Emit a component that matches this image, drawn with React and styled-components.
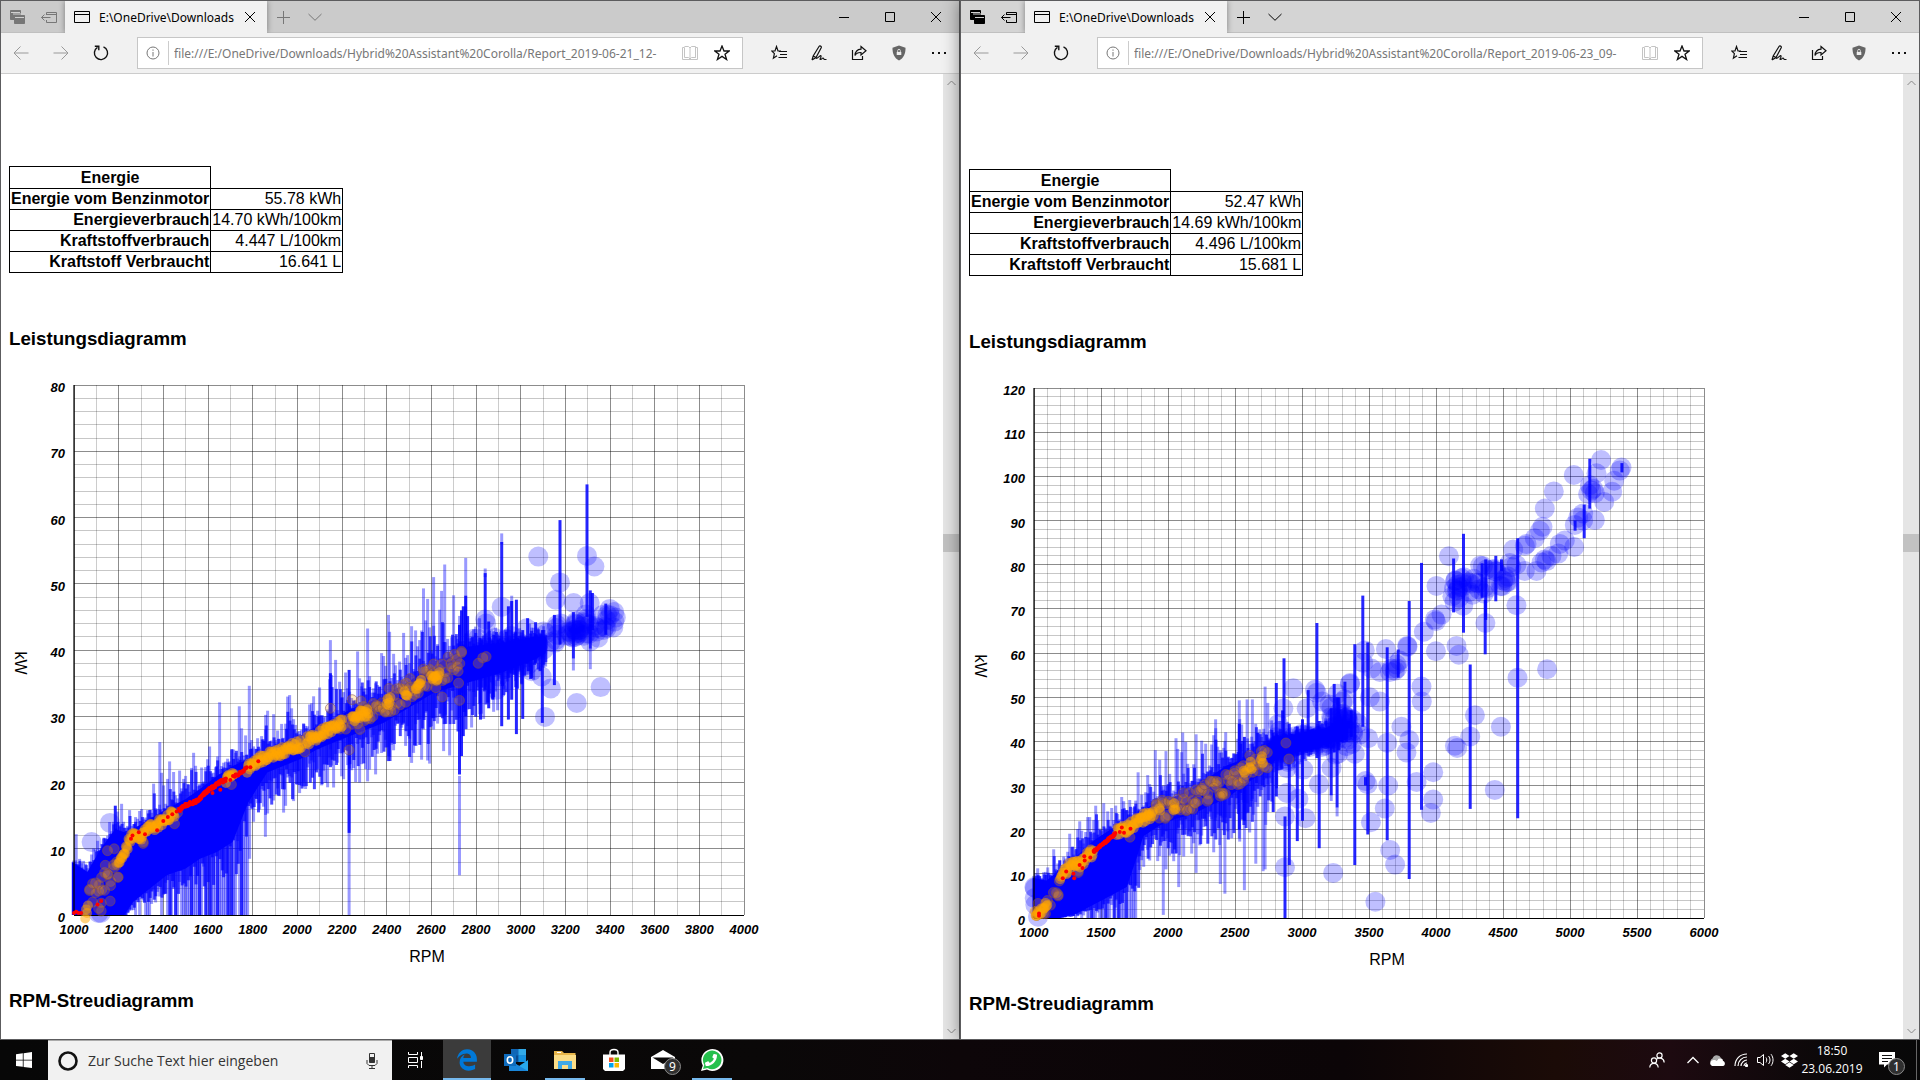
import React from "react";
import styled, { createGlobalStyle } from "styled-components";
import { FaEdgeLegacy, FaDropbox, FaPhoneAlt } from "react-icons/fa";

const GlobalStyle = createGlobalStyle`
    body {
        margin: 0;
        background: #000;
        color: #000;
        font-family: "Noto Sans", "Open Sans", sans-serif;
        font-size: 12px;
    }
    button, input {
        font-family: inherit;
        font-size: inherit;
        color: inherit;
        border: 0;
        padding: 0;
        background: none;
    }
    svg {
        display: block;
        flex-shrink: 0;
    }
`;

const Desktop = styled.div`
    display: flex;
    flex-direction: column;
    height: 100vh;
    overflow: hidden;
`;

const Windows = styled.div`
    flex: 1;
    min-height: 0;
    display: grid;
    grid-template-columns: 1fr 1fr;
`;

const BrowserWindow = styled.section`
    display: flex;
    flex-direction: column;
    min-width: 0;
    min-height: 0;
    border: 1px solid #5c5c5e;
    background: #fff;
    box-shadow: ${({ $active }) => ($active ? "0 0 16px rgba(0, 0, 0, 0.45)" : "none")};
`;

const TabStrip = styled.div`
    display: flex;
    height: 32px;
    color: ${({ $active }) => ($active ? "#000" : "#777")};
    background: ${({ $active }) => ($active ? "#d4d4d4" : "#cbcbcb")};
    box-shadow: inset 0 -1px 0 #c0c0c0;
`;

const StripButton = styled.button`
    display: flex;
    align-items: center;
    justify-content: center;
    width: 32px;
`;

const Tab = styled.div`
    display: flex;
    align-items: center;
    width: 202px;
    padding: 0 12px 0 9px;
    box-sizing: border-box;
    color: #000;
    background: #f1f1f1;
    box-shadow: 0 0 6px rgba(0, 0, 0, 0.4);
    clip-path: inset(0 -8px 0 -8px);
`;

const TabTitle = styled.span`
    flex: 1;
    margin: 0 8px 0 9px;
    overflow: hidden;
    white-space: nowrap;
`;

const Caption = styled.div`
    display: flex;
    margin-left: auto;
    color: #000;
`;

const CaptionButton = styled.button`
    display: flex;
    align-items: center;
    justify-content: center;
    width: 46px;
`;

const Toolbar = styled.div`
    display: flex;
    align-items: center;
    height: 40px;
    background: #f1f1f1;
    border-bottom: 1px solid #ccc;
`;

const ToolButton = styled.button`
    display: flex;
    align-items: center;
    justify-content: center;
    width: 40px;
    height: 32px;
    color: ${({ disabled }) => (disabled ? "#999" : "#111")};
`;

const AddressBar = styled.div`
    flex: 1;
    min-width: 0;
    display: flex;
    align-items: center;
    height: 30px;
    margin: 0 16px;
    border: 1px solid #c6c6c6;
    background: #fff;
    color: #777;
`;

const InfoMark = styled.span`
    display: flex;
    justify-content: center;
    align-items: center;
    width: 30px;
    height: 24px;
    border-right: 1px solid #ccc;
`;

const AddressInput = styled.input`
    flex: 1;
    min-width: 0;
    margin-left: 5px;
    outline: 0;
`;

const BookMark = styled.button`
    display: flex;
    justify-content: center;
    width: 24px;
    color: #c4c4c4;
`;

const Viewport = styled.div`
    flex: 1;
    min-height: 0;
    display: flex;
`;

const Page = styled.main`
    flex: 1;
    min-width: 0;
    overflow: hidden;
    padding: ${({ $top }) => $top}px 8px 0;
    font-family: "Liberation Sans", Arial, sans-serif;
    font-size: 16px;
`;

const ScrollBar = styled.div`
    display: flex;
    flex-direction: column;
    width: 16px;
    background: #e5e5e5;
    color: #888;
`;

const ScrollButton = styled.button`
    display: flex;
    align-items: center;
    justify-content: center;
    height: 17px;
`;

const ScrollSpace = styled.div`
    flex: ${({ $grow }) => $grow};
`;

const ScrollThumb = styled.div`
    height: 18px;
    background: #c2c2c2;
`;

const EnergyTable = styled.table`
    border-collapse: collapse;
    margin-bottom: 55px;
    line-height: 18px;

    th, td {
        border: 1px solid #000;
        padding: 1px;
        text-align: right;
        white-space: nowrap;
    }
    thead th {
        text-align: center;
        line-height: 19px;
    }
`;

const Heading = styled.h3`
    margin: 0 0 19px;
    line-height: 22px;
`;

const ChartSvg = styled.svg`
    margin-bottom: 21px;
    overflow: visible;
`;

const TickText = styled.text`
    font-size: 13px;
    font-weight: bold;
    font-style: italic;
    text-anchor: ${({ $anchor }) => $anchor};
`;

const AxisTitle = styled.text`
    font-size: 16px;
    text-anchor: middle;
`;

const TaskBar = styled.footer`
    display: flex;
    height: 40px;
    color: #fff;
    background: linear-gradient(90deg, #070707 0%, #0a0808 40%, #0d0609 50%, #0b0507 70%, #1b0b07 81%, #1d0a10 87%, #0b0809 95%, #080808 100%);
`;

const TaskButton = styled.button`
    display: flex;
    align-items: center;
    justify-content: center;
    position: relative;
    width: 48px;
    height: 40px;
    background: ${({ $current }) => ($current ? "#3b3b3b" : "none")};

    &::after {
        content: "";
        position: absolute;
        bottom: 0;
        left: ${({ $current }) => ($current ? 0 : 4)}px;
        right: ${({ $current }) => ($current ? 0 : 4)}px;
        height: 2px;
        background: ${({ $running }) => ($running ? "#76b9ed" : "transparent")};
    }
`;

const TaskApps = styled.div`
    display: flex;
    gap: 1px;
    margin-left: 3px;
`;

const SearchBox = styled.label`
    display: flex;
    align-items: center;
    width: 344px;
    padding: 0 14px 0 10px;
    box-sizing: border-box;
    background: #f1f1f1;
    border-top: 1px solid #aaa;
    color: #333;
`;

const SearchInput = styled.input`
    flex: 1;
    min-width: 0;
    margin-left: 10px;
    font-family: "Open Sans", "Noto Sans", sans-serif;
    font-size: 14px;
    outline: 0;

    &::placeholder {
        color: #333;
        opacity: 1;
    }
`;

const Count = styled.span`
    position: absolute;
    right: 6px;
    bottom: 5px;
    width: 17px;
    height: 17px;
    line-height: 15px;
    border: 1px solid #8a8a8a;
    box-sizing: border-box;
    border-radius: 50%;
    background: #2f2f2f;
    text-align: center;
`;

const Tray = styled.div`
    display: flex;
    align-items: center;
    margin-left: auto;
`;

const TrayButton = styled.button`
    display: flex;
    align-items: center;
    justify-content: center;
    width: ${({ $wide }) => ($wide ? 48 : 24)}px;
    height: 40px;
`;

const Clock = styled.time`
    width: 62px;
    font-family: "Open Sans", "Noto Sans", sans-serif;
    text-align: center;
    line-height: 18px;
    white-space: nowrap;
`;

const DesktopEdge = styled.div`
    width: 3px;
    height: 40px;
    margin-left: 5px;
    border-left: 1px solid #666;
`;

const Line = ({ w = 16, h = 16, width = 1, children }) => (
    <svg width={w} height={h} viewBox={`0 0 ${w} ${h}`} fill="none" stroke="currentColor" strokeWidth={width}>
        {children}
    </svg>
);

const TabsAsideIcon = () => (
    <Line>
        <path d="M1.500 1.500h10v9h-10z" fill="currentColor" />
        <path d="M2 3.500h9" stroke="#d0d0d0" />
        <path d="M4 5h12" stroke="#d0d0d0" />
        <path d="M5.500 6.500h10v8h-10z" fill="currentColor" />
        <path d="M6 8.500h9" stroke="#d0d0d0" />
    </Line>
);

const SetAsideIcon = () => (
    <Line>
        <path d="M5.500 6V3.500h10v10h-10V11M5.500 5.500h10M.5 8.500h9M3.500 5.500l-3 3 3 3" />
    </Line>
);

const StarPath = "M8 1l2 5h5.200l-4.200 3.300 1.600 5.200L8 11.400l-4.600 3.100L5 9.300.8 6H6z";

// seeded so that every render gives the same scatter
const makeRandom = (seed) => () => {
    seed = (seed * 1664525 + 1013904223) % 4294967296;
    return seed / 4294967296;
};

const lerp = (points, x) => {
    if (x <= points[0][0]) return points[0].slice(1);
    for (let i = 1; i < points.length; i++) {
        if (x <= points[i][0]) {
            const a = points[i - 1];
            const b = points[i];
            const t = (x - a[0]) / (b[0] - a[0]);
            return a.slice(1).map((v, n) => v + (b[n + 1] - v) * t);
        }
    }
    return points[points.length - 1].slice(1);
};

const range = (from, to, step) => {
    const list = [];
    for (let v = from; v <= to + 0.001; v += step) list.push(v);
    return list;
};

const trip1 = {
    seed: 21,
    maxRpm: 4000,
    maxKw: 80,
    majorRpm: 200,
    // rpm, top, bottom
    core: [[990, 8, 0], [1060, 6.500, 0], [1120, 10, 0], [1185, 13, 0], [1225, 12.500, 0], [1265, 13, 2], [1340, 14.500, 4], [1415, 16, 6], [1500, 17.500, 7], [1564, 19, 8.500], [1640, 21, 9.500], [1710, 22.500, 11], [1780, 23.500, 17], [1865, 25, 21.500], [1937, 26, 22.500], [2012, 27, 23.500], [2087, 28.500, 25], [2160, 29.500, 26], [2236, 31, 27], [2310, 32, 28], [2385, 33, 29], [2460, 34.500, 30.500], [2609, 37.500, 33.500], [2758, 40.500, 35], [2907, 41, 36.500], [3057, 42, 38.500], [3112, 42, 39.500]],
    outer: [[990, 10.500, 0], [1060, 9, 0], [1120, 14, 0], [1185, 17, 0], [1300, 18, 0], [1380, 24, 0], [1440, 23, 0], [1570, 26, 0], [1650, 28, 0], [1780, 30, 0], [1790, 30, 14], [1870, 31, 14], [1920, 33, 14], [2000, 34, 16], [2110, 38, 17], [2200, 40, 18], [2300, 43, 20], [2400, 45, 21], [2500, 47, 21], [2610, 50, 23], [2700, 49, 24], [2750, 51, 25], [2800, 46, 28], [2900, 44, 31], [3000, 44.500, 33], [3112, 44, 37]],
    zeroTo: 1780,
    centre: [[1050, 0], [1075, 3], [1120, 4.500], [1180, 6], [1210, 8.500], [1240, 10.500], [1270, 12.500], [1300, 12], [1330, 12.800], [1370, 13.700], [1430, 15], [1470, 15.800], [1500, 16.600], [1550, 17.200], [1600, 18.800], [1650, 20], [1700, 20.600], [1750, 21.600], [1790, 22.500], [1865, 24], [1937, 24.800], [2010, 25.700], [2087, 27], [2160, 28.400], [2236, 29.700], [2310, 30.500], [2385, 31.700], [2460, 33], [2540, 34.700], [2609, 35.700], [2650, 36.800], [2720, 38], [2850, 39.500]],
    solid: [[1050, 1066], [1200, 1450], [1680, 1720], [1775, 2020], [2040, 2205], [2245, 2320], [2400, 2420], [2480, 2495], [2530, 2555], [2600, 2640]],
    dim: [[1070, 1200], [1070, 1200], [1450, 1475], [2020, 2040], [2190, 2740], [2300, 2720]],
    red: [[1470, 1680], [1475, 1680], [1720, 1775]],
    redDots: [[1000, 0.300], [1010, 0.500], [1020, 0.300], [1032, 0.300], [1105, 1.600], [1122, 2.100], [1255, 11.500], [1262, 12], [1290, 12.500], [1318, 12.200], [1372, 12.800], [1400, 14.200], [1420, 14.800], [1440, 15.200], [1460, 15.600], [1655, 18.900], [1620, 18.400], [1700, 20.400], [1712, 21], [1790, 22.300], [1825, 23.200]],
    orangeDots: [[1110, 1], [1122, 0.600], [1122, 1.800], [1162, 2.100], [1197, 5.700], [1197, 5.700], [1150, 9.700], [1180, 10], [1140, 7.500], [1310, 10.800], [1310, 11], [1705, 19.700], [2148, 31.200], [2232, 24.900], [2245, 32.500], [2285, 32.300], [2280, 28], [2411, 34.200], [2564, 37.100], [2611, 37.900], [2648, 32.900], [2726, 32.400], [2735, 39.800], [2735, 39.600], [2722, 35], [2505, 35.700], [2720, 36.800], [2810, 38], [2830, 38.800], [2845, 39]],
    clusters: [[2760, 3110, 38.500, 40.500, 3.500, 44], [3110, 3420, 41.500, 44.500, 3, 34], [3220, 3320, 42.500, 44.500, 2, 10]],
    bubbles: [[3079, 54.100], [3297, 54.200], [3330, 52.600], [3176, 50.200], [3157, 47.600], [3237, 47.100], [2915, 46.500], [2841, 44.600], [2845, 44], [3309, 47.100], [3399, 46.200], [3426, 44.900], [3135, 34.200], [3109, 29.900], [3251, 32], [3358, 34.400], [3094, 36], [3049, 36.800], [3311, 41.300], [3385, 43.300], [3378, 43.500], [3370, 43], [3385, 44.500], [2893, 34], [2900, 36], [1079, 11], [1161, 13.900], [1109, 0.300], [1120, 0.300]],
    spikes: [[3297, 65, 45], [3176, 59.600, 40.800], [2915, 56.300, 28.500], [2841, 51.600, 34], [2960, 47.400, 32.500], [2981, 47.600, 27.300], [2945, 46.600, 29.500], [3009, 43, 29.600], [3031, 44.800, 38], [3067, 44.200, 38], [3097, 43, 29], [3151, 45.300, 34.700], [3236, 45.700, 38.700], [3312, 49, 40.200], [3321, 48.600, 43], [3381, 47, 42.300], [2726, 43.800, 21.200], [2754, 48.200, 30], [2735, 46, 24], [2743, 46.600, 27], [2857, 44.300, 31.200], [2820, 41, 29.500], [2875, 41, 32.500], [2232, 37, 12.400], [2148, 36.500, 29], [1185, 16.500, 4]],
    faint: [[2915, 57.600, 56], [2841, 52.300, 51], [2232, 25, 0], [2726, 21, 6], [2754, 53.900, 40], [3236, 38.700, 36.900], [3312, 40.200, 37.100], [2660, 52.900, 30], [1785, 34.600, 20], [1652, 32.100, 18], [1740, 31.500, 18], [1857, 28, 11.800], [2148, 41.500, 25], [2408, 45.300, 24], [1384, 26.100, 12], [2960, 48.200, 34], [1010, 12.200, 0], [2610, 51, 28], [2565, 49.300, 28]],
};

const trip2 = {
    seed: 77,
    maxRpm: 6000,
    maxKw: 120,
    majorRpm: 500,
    core: [[990, 9, 0], [1095, 8.500, 0], [1194, 11, 0], [1318, 14, 1], [1443, 17.500, 3], [1567, 20, 5], [1692, 22, 7], [1770, 23.500, 14], [1816, 24.500, 18.500], [1940, 26.500, 21], [2065, 27.500, 22.500], [2189, 29.500, 23.500], [2313, 32, 25.500], [2438, 34.500, 27], [2562, 36, 30], [2687, 38, 32.500], [2811, 41, 36], [2935, 41.500, 37.500], [3060, 42, 38], [3184, 43, 40], [3240, 44, 41], [3290, 44, 41.500], [3330, 43, 41.500]],
    outer: [[990, 12.500, 0], [1050, 12, 0], [1180, 17, 0], [1300, 21.500, 0], [1430, 26, 0], [1570, 27, 0], [1770, 30, 0], [1790, 31, 11], [1905, 36, 12], [1985, 36, 12], [2110, 40, 12], [2205, 40, 14], [2355, 43, 14], [2450, 42, 14], [2590, 48, 17], [2720, 47, 20], [2790, 45, 22], [2830, 45, 31], [2935, 44, 34], [3060, 44, 36], [3200, 46, 38], [3400, 45, 40]],
    zeroTo: 1770,
    centre: [[1000, 0.800], [1040, 1.500], [1100, 3], [1130, 5], [1180, 6.500], [1200, 8.500], [1250, 11.300], [1318, 12], [1368, 13], [1443, 15], [1617, 19.300], [1692, 20.300], [1816, 22.600], [1890, 23.600], [1940, 24.300], [2065, 25.500], [2189, 27], [2313, 28.600], [2438, 30], [2562, 33], [2637, 35], [2711, 36], [2900, 37.500]],
    solid: [[1005, 1100], [1195, 1445], [1617, 1890], [1935, 1945], [2040, 2055], [2565, 2575], [2610, 2630], [2695, 2710]],
    dim: [[1100, 1195], [1890, 2140], [1890, 2750], [2140, 2720], [2880, 2910]],
    red: [[1445, 1610], [1450, 1600]],
    redDots: [[1037, 0.500], [1037, 1], [1300, 9], [1295, 10], [1240, 10.500], [1215, 9], [1340, 12], [1362, 11.300], [1378, 13], [1375, 14], [1420, 13.700], [1448, 15], [1455, 15.300], [1640, 19.500], [1655, 20.500], [1672, 19.300], [1720, 20.200]],
    orangeDots: [[1180, 5.300], [1180, 5], [1716, 18.300], [1330, 10.300], [1330, 10.600], [1030, 3.300], [1070, 1], [1085, 1], [1020, 0.600], [2200, 26], [2300, 26.800], [2390, 27.600], [2410, 27.800], [2520, 30.800], [2562, 31.500], [2740, 34], [2720, 34.200], [1980, 22.800]],
    clusters: [[2760, 3240, 38.500, 41, 2, 60], [3220, 3440, 44, 42.500, 4.500, 30], [3180, 3340, 48, 48, 4, 12], [4120, 4420, 74, 77.500, 4.500, 26], [4380, 4560, 77, 77.500, 4, 9], [2800, 2900, 44, 36, 4, 12]],
    bubbles: [[5232, 103.700], [5384, 102], [5372, 101.300], [5028, 100.300], [4879, 96.600], [4812, 92.700], [5330, 99], [5315, 96.500], [5255, 94.200], [5185, 90.100], [5198, 100.700], [5148, 98], [5160, 96.800], [5173, 97.200], [5135, 96], [5185, 96.200], [5061, 90.700], [5098, 91.600], [5036, 89], [5098, 90], [5031, 84], [4961, 85.500], [4924, 84.700], [4912, 82.500], [4862, 82], [4825, 80.800], [4812, 81.200], [4787, 80.500], [4750, 78.600], [4663, 78.600], [4795, 88.600], [4775, 87.700], [4737, 86], [4675, 84.700], [4663, 84.300], [4576, 83.400], [4563, 79.500], [4600, 80], [4551, 80.400], [4526, 76], [4501, 76.400], [4538, 77.300], [4600, 70.800], [4608, 54.400], [4829, 56.300], [4484, 43.300], [4439, 29], [4096, 81.900], [4004, 75.200], [4369, 66.800], [4203, 70.700], [4330, 79.800], [4041, 68.700], [3999, 67.200], [3992, 67.600], [3909, 64.800], [3999, 60.400], [4153, 61.600], [4170, 59.600], [3892, 52.400], [3894, 49], [4290, 45.900], [4255, 41.100], [4141, 39], [4158, 38.500], [3785, 61.600], [3787, 61.400], [3979, 33], [3855, 30.800], [3979, 26.800], [3961, 23.800], [3800, 40.300], [3780, 37.500], [3636, 39.700], [3742, 43.300], [3643, 30], [3618, 24.800], [3658, 15.400], [3695, 12.100], [3548, 3.700], [3233, 10.200], [3514, 21.700], [3474, 31], [3489, 30.300], [3394, 37.200], [3494, 40.700], [3581, 49], [3506, 50], [3626, 60.900], [3469, 60.600], [3457, 57.800], [3519, 56.500], [3581, 55.700], [3668, 56.500], [3705, 57.400], [3730, 58.300], [3693, 56], [3656, 55.700], [3710, 56.500], [3357, 53], [3360, 53.200], [3220, 34], [3126, 30.300], [3026, 22.600], [2935, 52], [3097, 51.700], [3110, 51], [3035, 47.500], [2861, 47.500], [3010, 33.600], [2886, 28.300], [2973, 27], [2873, 23], [2873, 11.500], [3150, 49], [3250, 37], [3270, 37.200], [1007, 6.800], [1003, 7], [1005, 4.500], [1010, 3], [1030, 0.300]],
    spikes: [[5148, 104, 92.700], [5387, 103, 100.900], [5038, 90, 87.700], [5106, 93.600, 86], [4131, 81.400, 69.200], [4205, 87, 64.600], [4344, 80.300, 72.500], [4371, 81.200, 67.500], [4367, 72, 59.700], [4446, 82, 71.700], [4489, 81.200, 78.600], [4610, 86, 22.600], [4255, 57.400, 24.700], [3892, 80.400, 24.500], [3800, 71.800, 8.800], [3636, 61.300, 17.600], [3718, 60.800, 54.400], [3491, 62.400, 18.900], [3454, 73, 43.300], [3394, 62, 12], [3474, 31.900, 30], [3111, 66.800, 36.200], [3128, 44.600, 15.800], [3218, 47.500, 27.800], [3240, 53, 37.500], [3262, 50, 25], [3275, 50, 38], [3320, 53.500, 43], [3368, 47, 41], [3004, 45, 22], [3046, 51.600, 40], [2808, 53.200, 27.500], [2866, 58.800, 36], [2855, 47, 36], [2873, 23, 0], [2905, 44, 12], [2965, 43.400, 17.400], [2570, 41, 22], [2532, 44, 20], [2785, 42, 24]],
    faint: [[2532, 49.300, 18], [2590, 49.500, 26], [2630, 49.500, 27], [2725, 52.400, 11], [2710, 42, 10.600], [2745, 48.700, 24], [1965, 30, 0.700], [2080, 30, 7], [2425, 40, 5.500], [2390, 38, 7.700], [2570, 40, 6.300], [2655, 40, 12.300], [2210, 41.600, 10.200], [2355, 45, 22], [2110, 42, 20], [1777, 33, 14], [1905, 38, 18], [1985, 37.800, 11], [2060, 40.700, 20], [3262, 25, 23], [3218, 28, 26.500]],
};

const PLOT = { left: 65, top: 16, width: 670, height: 530 };

function PowerChart({ trip }) {
    const random = makeRandom(trip.seed);
    const sx = (rpm) => PLOT.left + ((rpm - 1000) / (trip.maxRpm - 1000)) * PLOT.width;
    const sy = (kw) => PLOT.top + PLOT.height - (kw / trip.maxKw) * PLOT.height;
    const pxRpm = (trip.maxRpm - 1000) / PLOT.width;
    const f = (n) => n.toFixed(1);
    const bar = (rpm, top, bottom) => `M${f(sx(rpm))} ${f(sy(top))}V${f(sy(bottom))}`;

    const firstRpm = trip.core[0][0];
    const lastRpm = trip.core[trip.core.length - 1][0];

    const faint = trip.faint.map((s) => bar(...s));
    const middle = [];
    range(firstRpm + 8, lastRpm, pxRpm * 2).forEach((rpm) => {
        const [coreTop, coreBottom] = lerp(trip.core, rpm);
        const [top, bottom] = lerp(trip.outer, rpm);
        const up = random();
        const down = random();
        const early = rpm < trip.zeroTo;
        const toZero = rpm > 1220 && early && random() < (rpm < 1420 ? 0.35 : 0.8);
        const low = early
            ? coreBottom * (0.3 + random() * 0.6)
            : coreBottom + (bottom - coreBottom) * (0.15 + down * down * 0.85);
        faint.push(bar(rpm, coreTop + (top - coreTop) * (0.1 + up * up * 0.9), toZero ? 0 : low));
        const midBottom = early ? coreBottom * 0.3 : bottom;
        const midDown = random();
        middle.push(bar(
            rpm + random() * pxRpm,
            coreTop + (top - coreTop) * up * random() * 0.75,
            toZero && random() < 0.3 ? 0 : coreBottom + (midBottom - coreBottom) * midDown * 0.75
        ));
    });

    const coreShape = [
        ...trip.core.map(([rpm, top]) => `${f(sx(rpm))},${f(sy(top))}`),
        ...[...trip.core].reverse().map(([rpm, , bottom]) => `${f(sx(rpm))},${f(sy(bottom))}`),
    ].join(" ");

    const bubbles = [...trip.bubbles];
    trip.clusters.forEach(([from, to, kwFrom, kwTo, spread, count]) => {
        for (let i = 0; i < count; i++) {
            const t = random();
            const off = (random() + random() - 1) * spread;
            bubbles.push([from + (to - from) * t, kwFrom + (kwTo - kwFrom) * t + off]);
        }
    });

    const along = (ranges, step, spread) =>
        ranges.flatMap(([from, to]) =>
            range(from, to, pxRpm * step).map((rpm) => [rpm, lerp(trip.centre, rpm)[0] + (random() - 0.5) * spread])
        );
    const unit = trip.maxKw / 80;
    const dim = [...along(trip.dim, 3, 3.400 * unit), ...trip.orangeDots];
    const solid = along(trip.solid, 0.900, 1.400 * unit);
    const red = [...along(trip.red, 0.700, 0.500), ...trip.redDots];

    return (
        <ChartSvg width="780" height="600" viewBox="0 0 780 600" role="img" aria-label="Leistungsdiagramm">
            <g stroke="#000" shapeRendering="crispEdges">
                {range(1000, trip.maxRpm, 100).map((rpm) => (
                    <path
                        key={"x" + rpm}
                        d={bar(rpm, trip.maxKw, 0)}
                        strokeOpacity={(rpm - 1000) % trip.majorRpm === 0 ? 0.45 : 0.2}
                    />
                ))}
                {range(0, trip.maxKw, 2).map((kw) => (
                    <path
                        key={"y" + kw}
                        d={`M${PLOT.left} ${f(sy(kw))}h${PLOT.width}`}
                        strokeOpacity={kw % 10 === 0 ? 0.45 : 0.22}
                    />
                ))}
            </g>
            <g stroke="#00f" strokeWidth="3" fill="none">
                {faint.map((d, i) => <path key={i} d={d} strokeOpacity="0.4" />)}
                {middle.map((d, i) => <path key={i} d={d} strokeOpacity="0.7" />)}
            </g>
            <polygon points={coreShape} fill="#00f" />
            <g fill="#00f" fillOpacity="0.25">
                {bubbles.map(([rpm, kw], i) => <circle key={i} cx={f(sx(rpm))} cy={f(sy(kw))} r="10" />)}
            </g>
            <g stroke="#00f" strokeWidth="3" strokeOpacity="0.85">
                {trip.spikes.map((s, i) => <path key={i} d={bar(...s)} />)}
            </g>
            <path d={`M${PLOT.left} ${PLOT.top}v${PLOT.height}`} stroke="#000" strokeWidth="2" strokeOpacity="0.6" />
            <path d={`M${PLOT.left} ${PLOT.top + PLOT.height}h${PLOT.width}`} stroke="#000" strokeWidth="1" shapeRendering="crispEdges" />
            <g fill="#ffa500">
                {dim.map(([rpm, kw], i) => <circle key={i} cx={f(sx(rpm))} cy={f(sy(kw))} r="5" fillOpacity="0.24" stroke="#804c50" strokeOpacity="0.55" />)}
                {solid.map(([rpm, kw], i) => <circle key={i} cx={f(sx(rpm))} cy={f(sy(kw))} r="5" fillOpacity="0.5" />)}
            </g>
            <g fill="#f00">
                {red.map(([rpm, kw], i) => <circle key={i} cx={f(sx(rpm))} cy={f(sy(kw))} r="2" />)}
            </g>
            {range(0, trip.maxKw, 10).map((kw) => (
                <TickText key={kw} x={PLOT.left - 9} y={f(sy(kw) + 7)} $anchor="end">{kw}</TickText>
            ))}
            {range(1000, trip.maxRpm, trip.majorRpm).map((rpm) => (
                <TickText key={rpm} x={f(sx(rpm))} y={PLOT.top + PLOT.height + 19} $anchor="middle">{rpm}</TickText>
            ))}
            <AxisTitle x="418" y="593">RPM</AxisTitle>
            <AxisTitle transform="translate(6 294) rotate(90)">kW</AxisTitle>
        </ChartSvg>
    );
}

function Browser({ active, url, top, energy, trip }) {
    return (
        <BrowserWindow $active={active}>
            <TabStrip $active={active}>
                <StripButton aria-label="Beiseitegelegte Tabs"><TabsAsideIcon /></StripButton>
                <StripButton aria-label="Tabs beiseitelegen"><SetAsideIcon /></StripButton>
                <Tab>
                    <Line><path d="M.5 2.500h15v11H.5zM.5 5.500h15" /></Line>
                    <TabTitle>E:\OneDrive\Downloads</TabTitle>
                    <Line w={10} h={10}><path d="M0 0l10 10M10 0L0 10" /></Line>
                </Tab>
                <StripButton aria-label="Neuer Tab">
                    <Line w={13} h={13}><path d="M6.500 0v13M0 6.500h13" /></Line>
                </StripButton>
                <StripButton aria-label="Tabvorschau">
                    <Line w={14} h={8}><path d="M.5 1L7 7.300 13.500 1" /></Line>
                </StripButton>
                <Caption>
                    <CaptionButton aria-label="Minimieren"><Line w={10} h={10}><path d="M0 5.500h10" /></Line></CaptionButton>
                    <CaptionButton aria-label="Maximieren"><Line w={10} h={10}><path d="M.5.5h9v9h-9z" /></Line></CaptionButton>
                    <CaptionButton aria-label="Schließen"><Line w={10} h={10}><path d="M0 0l10 10M10 0L0 10" /></Line></CaptionButton>
                </Caption>
            </TabStrip>
            <Toolbar>
                <ToolButton disabled aria-label="Zurück"><Line><path d="M15.500 8H1.200M7.500 1.500L1 8l6.500 6.500" /></Line></ToolButton>
                <ToolButton disabled aria-label="Vorwärts"><Line><path d="M.5 8h14.300M8.500 1.500L15 8l-6.500 6.500" /></Line></ToolButton>
                <ToolButton aria-label="Aktualisieren">
                    <Line width={1.400}><path d="M10.500 1.900A6.600 6.600 0 1 1 4.500 2.400M1.800 1.200h4v4" /></Line>
                </ToolButton>
                <AddressBar>
                    <InfoMark>
                        <Line w={14} h={14}><circle cx="7" cy="7" r="6" /><path d="M7 6v4.500M7 3.500v1.300" /></Line>
                    </InfoMark>
                    <AddressInput aria-label="Adresse" value={url} readOnly />
                    <BookMark aria-label="Leseansicht">
                        <Line><path d="M8 2.500v12M.5 2.500h2v10h4l1.500 1.500 1.500-1.500h4v-10h2v12H.5zM2.500 1.500h4L8 3l1.500-1.500h4v11" /></Line>
                    </BookMark>
                    <ToolButton aria-label="Favorit"><Line width={1.300}><path d={StarPath} /></Line></ToolButton>
                </AddressBar>
                <ToolButton aria-label="Hub">
                    <Line width={1.200}><path d="M10 6H7L5.500 1.500 4 6H.8l2.600 2.600-1 4.600L6 10.800M8 6.500h8M9 9.500h7M7.500 12.500H16" /></Line>
                </ToolButton>
                <ToolButton aria-label="Notizen">
                    <Line width={1.200}><path d="M1 15l1.200-4L8 1.500c.8-1.200 2.800-.2 2.200 1.200L5 12.500l-4 2.500M2.200 11l2.800 1.500M5 13.500c2.500-.5 4.500-4 5-2.500s-2 3.500-.5 3.500 1.500-1.500 2.500-1.500.5 1.500 1.500 1.500h2" /></Line>
                </ToolButton>
                <ToolButton aria-label="Teilen">
                    <Line width={1.200}><path d="M1.500 5v9.500h10V11M10 1.500l5 4.200-5 4.300V7.500C7 7.300 5 8.500 4 10.500 4.200 7 6 4.500 10 4.200z" /></Line>
                </ToolButton>
                <ToolButton aria-label="Datenschutz">
                    <svg width="16" height="16" viewBox="0 0 16 16">
                        <path d="M8 .5l6.500 2.300c.2 6-2 10.500-6.500 12.700C3.500 13.300 1.300 8.800 1.500 2.800z" fill="#666" />
                        <path d="M5.700 7h4.600v3H5.700z" fill="#eee" />
                        <path d="M6.700 7V5.600a1.300 1.300 0 0 1 2.600 0V7" fill="none" stroke="#ddd" />
                    </svg>
                </ToolButton>
                <ToolButton aria-label="Mehr"><Line w={14} h={4} width={2}><path d="M0 2h2M6 2h2M12 2h2" /></Line></ToolButton>
            </Toolbar>
            <Viewport>
                <Page $top={top}>
                    <EnergyTable>
                        <thead>
                            <tr><th>Energie</th></tr>
                        </thead>
                        <tbody>
                            {energy.map(([label, value]) => (
                                <tr key={label}>
                                    <th>{label}</th>
                                    <td>{value}</td>
                                </tr>
                            ))}
                        </tbody>
                    </EnergyTable>
                    <Heading>Leistungsdiagramm</Heading>
                    <PowerChart trip={trip} />
                    <Heading>RPM-Streudiagramm</Heading>
                </Page>
                <ScrollBar>
                    <ScrollButton aria-label="Nach oben"><Line w={9} h={6}><path d="M.5 5l4-4 4 4" /></Line></ScrollButton>
                    <ScrollSpace $grow={443} />
                    <ScrollThumb />
                    <ScrollSpace $grow={470} />
                    <ScrollButton aria-label="Nach unten"><Line w={9} h={6}><path d="M.5 1l4 4 4-4" /></Line></ScrollButton>
                </ScrollBar>
            </Viewport>
        </BrowserWindow>
    );
}

function Taskbar() {
    return (
        <TaskBar>
            <TaskButton aria-label="Start">
                <svg width="16" height="16" viewBox="0 0 16 16" fill="#fff">
                    <path d="M0 2.300l6.800-1v6.400H0zM7.600 1.200L16 0v7.700H7.600zM0 8.500h6.800v6.300L0 13.900zM7.600 8.500H16V16l-8.400-1.100z" />
                </svg>
            </TaskButton>
            <SearchBox>
                <Line w={20} h={20} width={2.600}><circle cx="10" cy="10" r="8.500" stroke="#111" /></Line>
                <SearchInput aria-label="Suche" placeholder="Zur Suche Text hier eingeben" />
                <Line w={12} h={18}>
                    <path d="M3.500 1.500h5v9h-5z" />
                    <path d="M4 5.500h4v5H4z" fill="currentColor" />
                    <path d="M1 8v3.500l2 2h6l2-2V8M6 13.500v3M3 16.500h6" />
                </Line>
            </SearchBox>
            <TaskButton aria-label="Aktive Anwendungen">
                <Line w={18} h={16}>
                    <path d="M1.500 0v2.500h9V0M1.500 5.500h9v5h-9zM1.500 16v-2.500h9V16M14.500 0v4M14.500 9v7" />
                    <path d="M13.500 4.500h2v3h-2z" fill="#fff" />
                </Line>
            </TaskButton>
            <TaskApps>
                <TaskButton $current $running aria-label="Microsoft Edge"><FaEdgeLegacy size={22} color="#0078d7" /></TaskButton>
                <TaskButton aria-label="Outlook">
                    <svg width="24" height="22" viewBox="0 0 24 22">
                        <path d="M7 0h15v13H7z" fill="#1066b5" />
                        <path d="M14.500 0H22v6.500h-7.500z" fill="#32a9e7" />
                        <path d="M7 6.500h7.500V13H7z" fill="#0a4a8f" />
                        <path d="M14.500 6.500H22V13h-7.500z" fill="#1490df" />
                        <path d="M5 11l10 6 9-6v11H5z" fill="#28a8ea" />
                        <path d="M5 11l19 11H5z" fill="#1a86d9" />
                        <path d="M0 5h12v12H0z" fill="#0f6cbd" />
                        <ellipse cx="6" cy="11" rx="2.700" ry="3.200" fill="none" stroke="#fff" strokeWidth="1.600" />
                    </svg>
                </TaskButton>
                <TaskButton $running aria-label="Explorer">
                    <svg width="22" height="20" viewBox="0 0 22 20">
                        <path d="M0 1h8l2 2h11.500v16H0z" fill="#e8b64a" />
                        <path d="M0 5h22v14H0z" fill="#fbdd87" />
                        <path d="M4 19v-8h14v8h-4v-4H8v4z" fill="#3fa9e8" />
                        <path d="M3 2h4v1H3z" fill="#fff" />
                    </svg>
                </TaskButton>
                <TaskButton aria-label="Store">
                    <svg width="24" height="24" viewBox="0 0 24 24">
                        <path d="M8 7V4.500C8 .5 16 .5 16 4.500V7" fill="none" stroke="#fff" strokeWidth="1.400" />
                        <path d="M1 6.500h22V21l-2 2H3l-2-2z" fill="#fff" />
                        <path d="M7 9.500h4.500V14H7z" fill="#f25022" />
                        <path d="M12.500 9.500H17V14h-4.500z" fill="#7fba00" />
                        <path d="M7 15h4.500v4.500H7z" fill="#00a4ef" />
                        <path d="M12.500 15H17v4.500h-4.500z" fill="#ffb900" />
                    </svg>
                </TaskButton>
                <TaskButton aria-label="Mail">
                    <svg width="24" height="20" viewBox="0 0 24 20">
                        <path d="M0 7l12-7 12 7v12H0z" fill="#fff" />
                        <path d="M1.500 7.500h21L12 14z" fill="#0a0808" />
                    </svg>
                    <Count>9</Count>
                </TaskButton>
                <TaskButton $running aria-label="WhatsApp">
                    <svg width="24" height="24" viewBox="0 0 24 24">
                        <path d="M1 23l1.800-5.600A11 11 0 1 1 7 21.600z" fill="#fff" />
                        <path d="M3 21l1.300-4.200a9.300 9.300 0 1 1 3.200 3.100z" fill="#25c04d" />
                        <g transform="matrix(-1 0 0 1 24 0)">
                            <FaPhoneAlt x="7" y="6" width="10" height="11" color="#fff" />
                        </g>
                    </svg>
                </TaskButton>
            </TaskApps>
            <Tray>
                <TrayButton $wide aria-label="Kontakte">
                    <Line w={16} h={16} width={1.200}>
                        <circle cx="10.500" cy="3.500" r="2.600" /><circle cx="5" cy="8.500" r="2.600" />
                        <path d="M.8 15.500c.2-5.500 8-5.500 8.400 0M7.500 7.500c2-2.500 7.300-2 7.700 3" />
                    </Line>
                </TrayButton>
                <TrayButton aria-label="Ausgeblendete Symbole"><Line w={12} h={8} width={1.300}><path d="M.5 7L6 1.500 11.500 7" /></Line></TrayButton>
                <TrayButton aria-label="OneDrive">
                    <svg width="16" height="11" viewBox="0 0 16 11">
                        <path d="M2 8a3 3 0 0 1 1.500-4.500A4.500 4.500 0 0 1 12 3z" fill="#aaa" />
                        <path d="M3 11a3 3 0 0 1 .5-5.700C5 4.800 7 5 8 5.500 10 2 14 3 14 6c2.500.3 2.500 5 0 5z" fill="#fff" />
                    </svg>
                </TrayButton>
                <TrayButton aria-label="WLAN">
                    <Line w={14} h={14} width={1.200}>
                        <path d="M1 13C1 6 6 1 13 1M4 13c0-5 4-9 9-9M7 13c0-3 3-6 6-6M10 13c0-1.500 1.500-3 3-3" />
                        <circle cx="12.500" cy="12.500" r="1" fill="#fff" />
                    </Line>
                </TrayButton>
                <TrayButton aria-label="Lautstärke">
                    <Line w={17} h={14}>
                        <path d="M.5 4.500H3l3.500-3v11L3 9.500H.5zM9 4.500c1 1.500 1 3.500 0 5M11.500 3c2 2.500 2 5.500 0 8M14 1.200c2.700 3.500 2.700 8 0 11.600" />
                    </Line>
                </TrayButton>
                <TrayButton aria-label="Dropbox"><FaDropbox size={17} /></TrayButton>
                <Clock>18:50<br />23.06.2019</Clock>
                <TaskButton aria-label="Info-Center">
                    <svg width="16" height="16" viewBox="0 0 16 16">
                        <path d="M0 0h16v12.500H8L5 15.500v-3H0z" fill="#fff" />
                        <path d="M3 3.500h10M3 6.500h10M3 9.500h6" stroke="#111" />
                    </svg>
                    <Count>1</Count>
                </TaskButton>
                <DesktopEdge />
            </Tray>
        </TaskBar>
    );
}

function App() {
    return (
        <Desktop>
            <GlobalStyle />
            <Windows>
                <Browser
                    url="file:///E:/OneDrive/Downloads/Hybrid%20Assistant%20Corolla/Report_2019-06-21_12-"
                    top={92}
                    trip={trip1}
                    energy={[
                        ["Energie vom Benzinmotor", "55.78 kWh"],
                        ["Energieverbrauch", "14.70 kWh/100km"],
                        ["Kraftstoffverbrauch", "4.447 L/100km"],
                        ["Kraftstoff Verbraucht", "16.641 L"],
                    ]}
                />
                <Browser
                    active
                    url="file:///E:/OneDrive/Downloads/Hybrid%20Assistant%20Corolla/Report_2019-06-23_09-"
                    top={95}
                    trip={trip2}
                    energy={[
                        ["Energie vom Benzinmotor", "52.47 kWh"],
                        ["Energieverbrauch", "14.69 kWh/100km"],
                        ["Kraftstoffverbrauch", "4.496 L/100km"],
                        ["Kraftstoff Verbraucht", "15.681 L"],
                    ]}
                />
            </Windows>
            <Taskbar />
        </Desktop>
    );
}

export default App;
